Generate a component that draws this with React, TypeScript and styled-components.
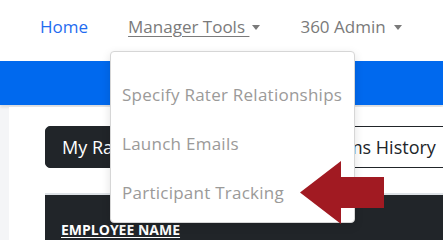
import styled, { createGlobalStyle } from 'styled-components'

const GlobalStyle = createGlobalStyle`
    html, body {
        margin: 0;
        padding: 0;
        background: #ffffff;
        overflow: hidden;
        font-family: "Open Sans", "Liberation Sans", sans-serif;
    }
`

const Page = styled.div`
    width: 443px;
    height: 240px;
    position: relative;
    display: flex;
    flex-direction: column;
    background: #f4f5f7;
    overflow: hidden;
`

const NavBar = styled.nav`
    height: 61px;
    flex-shrink: 0;
    background: white;
    display: flex;
    align-items: flex-start;
    padding-left: 40px;
    gap: 40px;
    box-sizing: border-box;
`

const NavItem = styled.div`
    position: relative;
    padding-top: 14px;
`

const NavLink = styled('a') <{ $active?: boolean; $open?: boolean; $caret?: boolean }>`
    display: inline-block;
    font-size: 17px;
    line-height: 26px;
    color: ${(props) => props.$active ? '#1f6cf0' : '#7a7a7a'};
    text-decoration: ${(props) => props.$open ? 'underline' : 'none'};
    text-underline-offset: 3px;
    white-space: pre;
    cursor: pointer;
    &::after {
        content: '';
        display: ${(props) => props.$caret ? 'inline-block' : 'none'};
        margin-left: ${(props) => props.$open ? '3px' : '8px'};
        vertical-align: 3px;
        border-top: 5px solid #7a7a7a;
        border-left: 4.5px solid transparent;
        border-right: 4.5px solid transparent;
    }
`

const Dropdown = styled.ul`
    position: absolute;
    left: -18px;
    top: 51px;
    width: 245px;
    height: 172px;
    margin: 0;
    padding: 18px 0 0;
    box-sizing: border-box;
    list-style: none;
    background: white;
    border: 1px solid #d6d6d6;
    border-radius: 4px;
    box-shadow: 0 3px 10px rgba(0, 0, 0, 0.12);
    z-index: 10;
`

const DropItem = styled.li`
    height: 49px;
    line-height: 49px;
    padding-left: 11px;
    font-size: 17px;
    letter-spacing: 0.25px;
    color: #9b9a99;
    white-space: nowrap;
`

const Arrow = styled.svg`
    position: absolute;
    left: 189px;
    top: 109px;
    z-index: 11;
`

const Band = styled.div`
    height: 44px;
    flex-shrink: 0;
    background: #0069ee;
    box-shadow: 0 2px 3px rgba(0, 0, 0, 0.12);
`

const Main = styled.main`
    flex: 1;
    padding: 2px 0 0 9px;
`

const Panel = styled.section`
    height: 100%;
    background: white;
    padding: 19px 0 0 36px;
    box-sizing: border-box;
`

const ButtonRow = styled.div`
    display: flex;
    width: 600px;
`

const Tab = styled('button') <{ $dark?: boolean; $offset?: number }>`
    height: 42px;
    padding: 0 16px;
    margin-left: ${(props) => props.$offset ?? 0}px;
    font-family: inherit;
    font-size: 18px;
    border-radius: ${(props) => props.$dark ? '5px' : '0'};
    border: 1px solid #212529;
    border-left-width: ${(props) => props.$dark ? '1px' : '0'};
    border-right-width: ${(props) => props.$dark ? '1px' : '0'};
    background: ${(props) => props.$dark ? '#212529' : 'white'};
    color: ${(props) => props.$dark ? 'white' : '#212529'};
    white-space: nowrap;
`

const Table = styled.table`
    margin-top: 25px;
    width: 420px;
    border-collapse: collapse;
`

const HeadRow = styled.tr`
    background: #212529;
    border-top: 2px solid #dee2e6;
`

const HeadCell = styled.th`
    text-align: left;
    padding: 25px 16px 10px;
    font-size: 14px;
    font-weight: 700;
    color: white;
    text-decoration: underline;
    text-underline-offset: 2px;
`

export default function App() {
    return (
        <>
            <GlobalStyle />
            <Page>
                <NavBar>
                    <NavItem>
                        <NavLink $active>Home</NavLink>
                    </NavItem>
                    <NavItem>
                        <NavLink $open $caret>{'Manager Tools '}</NavLink>
                        <Dropdown>
                            <DropItem>Specify Rater Relationships</DropItem>
                            <DropItem>Launch Emails</DropItem>
                            <DropItem>Participant Tracking</DropItem>
                            <Arrow width="84" height="63" viewBox="0 0 84 63">
                                <polygon points="0,31.5 41,0 41,16 84,16 84,47 41,47 41,63" fill="#a11a22" />
                            </Arrow>
                        </Dropdown>
                    </NavItem>
                    <NavItem>
                        <NavLink $caret>360 Admin</NavLink>
                    </NavItem>
                </NavBar>
                <Band />
                <Main>
                    <Panel>
                        <ButtonRow>
                            <Tab $dark>My Raters</Tab>
                            <Tab $offset={140}>Forms History</Tab>
                        </ButtonRow>
                        <Table>
                            <thead>
                                <HeadRow>
                                    <HeadCell>EMPLOYEE NAME</HeadCell>
                                </HeadRow>
                            </thead>
                        </Table>
                    </Panel>
                </Main>
            </Page>
        </>
    )
}
